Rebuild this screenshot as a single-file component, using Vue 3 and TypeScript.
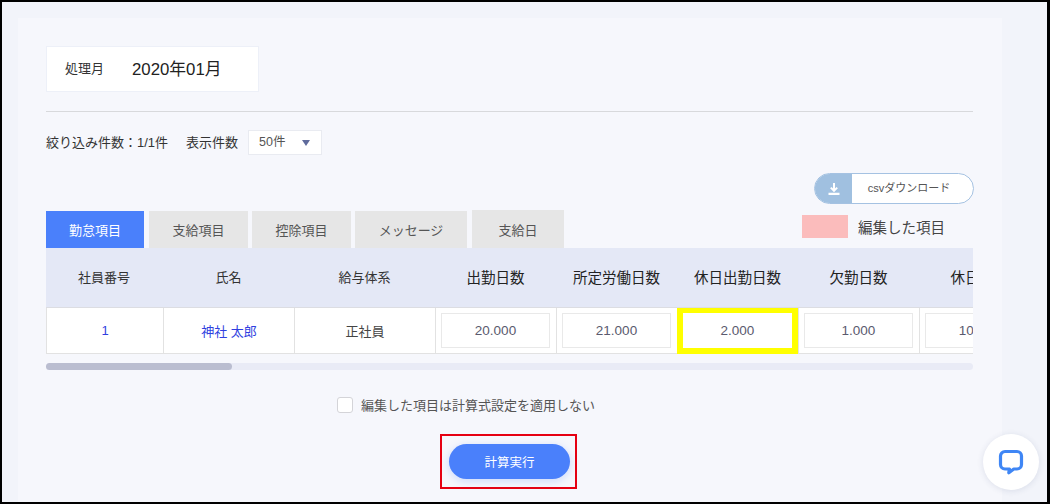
<script setup lang="ts">
const tabs = [
  { label: '勤怠項目', cls: 'tab-attend' },
  { label: '支給項目', cls: 'tab-pay' },
  { label: '控除項目', cls: 'tab-deduct' },
  { label: 'メッセージ', cls: 'tab-msg' },
  { label: '支給日', cls: 'tab-date' },
]
const inputs = [
  { head: '出勤日数', value: '20.000', hl: false },
  { head: '所定労働日数', value: '21.000', hl: false },
  { head: '休日出勤日数', value: '2.000', hl: true },
  { head: '欠勤日数', value: '1.000', hl: false },
  { head: '休日日数', value: '10.000', hl: false },
]
</script>

<template>
  <div class="frame">
    <div class="card">
      <div class="month-box">
        <span class="month-label">処理月</span>
        <span class="month-value">2020年01月</span>
      </div>
      <hr class="divider" />
      <div class="filter-row">
        <span>絞り込み件数：1/1件</span>
        <span class="count-label">表示件数</span>
        <div class="select">
          <span>50件</span>
          <span class="caret"></span>
        </div>
      </div>
      <div class="csv-row">
        <div class="csv-btn">
          <span class="csv-icon">
            <svg width="14" height="14" viewBox="0 0 14 14" fill="none" stroke="#fff" stroke-width="2">
              <path d="M7 1v7.500M3.800 5.600 7 8.800l3.200-3.200" />
              <path d="M1.500 11.800h11" stroke-width="2.200" />
            </svg>
          </span>
          <span class="csv-text">csvダウンロード</span>
        </div>
      </div>
      <div class="tab-row">
        <div class="tabs">
          <div v-for="(t, i) in tabs" :key="t.label" class="tab" :class="[t.cls, { active: i === 0 }]">{{ t.label }}</div>
        </div>
        <div class="legend">
          <span class="swatch"></span>
          <span>編集した項目</span>
        </div>
      </div>
      <div class="table-wrap">
        <table class="grid">
          <colgroup>
            <col class="c1" /><col class="c2" /><col class="c3" />
            <col v-for="n in inputs" :key="n.head" class="c4" />
          </colgroup>
          <thead>
            <tr>
              <th>社員番号</th><th>氏名</th><th>給与体系</th>
              <th v-for="n in inputs" :key="n.head" class="big">{{ n.head }}</th>
            </tr>
          </thead>
          <tbody>
            <tr>
              <td class="link">1</td>
              <td class="link">神社 太郎</td>
              <td class="plain">正社員</td>
              <td v-for="n in inputs" :key="n.head" class="input-cell" :class="{ hl: n.hl }">
                <div class="num">{{ n.value }}</div>
              </td>
            </tr>
          </tbody>
        </table>
      </div>
      <div class="scroll"><div class="thumb"></div></div>
      <label class="check-row">
        <span class="check"></span>
        <span class="check-text">編集した項目は計算式設定を適用しない</span>
      </label>
      <div class="run-row">
        <div class="red-box">
          <div class="run-btn">計算実行</div>
        </div>
      </div>
    </div>
    <div class="chat">
      <svg width="26" height="26" viewBox="0 0 26 26" fill="none">
        <path d="M7 2.500h12a4.500 4.500 0 0 1 4.500 4.500v8.500a4.500 4.500 0 0 1-4.500 4.500h-3.200l-5 3.800.6-3.800H7a4.500 4.500 0 0 1-4.500-4.500V7A4.500 4.500 0 0 1 7 2.500Z" stroke="#3f86f5" stroke-width="3.200" stroke-linejoin="round" />
      </svg>
    </div>
  </div>
</template>

<style>
html, body { margin: 0; padding: 0; background: #000; }
</style>

<style scoped>
.frame {
  position: relative;
  box-sizing: border-box;
  width: 1050px;
  height: 504px;
  overflow: hidden;
  background: #f2f4fa;
  border: solid #000;
  border-width: 2px 3px 2px 2px;
  padding: 16px 0 0 16px;
  font-family: "Liberation Sans", "Noto Sans CJK JP", sans-serif;
  color: #333;
  font-size: 13px;
}
.card {
  box-sizing: border-box;
  width: 984px;
  height: 484px;
  background: #f6f7fc;
  padding: 28px 29px 0 28px;
  display: flex;
  flex-direction: column;
}
.month-box {
  box-sizing: border-box;
  width: 213px;
  height: 46px;
  background: #fff;
  border: 1px solid #edf0f8;
  display: flex;
  align-items: center;
  padding: 0 0 3px 18px;
  flex: none;
}
.month-label { font-size: 13px; width: 67px; }
.month-value { font-size: 16.800px; color: #222; }
.divider {
  width: 100%;
  height: 1px;
  border: 0;
  background: #d8d9dc;
  margin: 19px 0 18px;
  flex: none;
}
.filter-row {
  display: flex;
  align-items: center;
  height: 25px;
  flex: none;
  font-size: 13px;
  line-height: 23px;
}
.filter-row > span { padding-bottom: 1px; }
.count-label { margin-left: 18px; }
.select {
  box-sizing: border-box;
  width: 74px;
  height: 25px;
  margin-left: 10px;
  background: #fff;
  border: 1px solid #e9ebf1;
  display: flex;
  align-items: center;
  justify-content: space-between;
  padding: 0 11px 0 10px;
  font-size: 12.500px;
  color: #555;
}
.caret {
  width: 0;
  height: 0;
  border-left: 4.500px solid transparent;
  border-right: 4.500px solid transparent;
  border-top: 6px solid #5f6b9c;
}
.csv-row {
  display: flex;
  justify-content: flex-end;
  margin-top: 18px;
  margin-right: -1px;
  flex: none;
}
.csv-btn {
  box-sizing: border-box;
  width: 160px;
  height: 31px;
  border: 1px solid #a5c2e2;
  border-radius: 16px;
  background: #fff;
  display: flex;
  overflow: hidden;
}
.csv-icon {
  width: 37px;
  background: #a0c0e0;
  display: flex;
  align-items: center;
  justify-content: center;
}
.csv-text {
  flex: 1;
  text-align: center;
  line-height: 29px;
  font-size: 11px;
  color: #555;
  padding-right: 7px;
}
.tab-row {
  display: flex;
  justify-content: space-between;
  height: 38px;
  margin-top: 6px;
  flex: none;
}
.tabs { display: flex; align-items: flex-end; }
.tab {
  box-sizing: border-box;
  height: 37px;
  background: #e6e6e6;
  color: #555;
  font-size: 13px;
  display: flex;
  align-items: center;
  justify-content: center;
  margin-right: 4px;
}
.tab-attend { width: 98px; margin-right: 5px; }
.tab-pay { width: 99px; }
.tab-deduct { width: 99px; }
.tab-msg { width: 112px; margin-right: 5px; }
.tab-date { width: 92px; height: 38px; }
.tab.active { background: #4a80fb; color: #fff; }
.legend {
  display: flex;
  align-items: center;
  gap: 10px;
  height: 23px;
  margin-top: 5px;
  margin-right: 28px;
  font-size: 14.500px;
  color: #444;
}
.swatch { width: 46px; height: 23px; background: #fbbcbc; }
.table-wrap {
  width: 927px;
  overflow: hidden;
  flex: none;
}
.grid {
  border-collapse: separate;
  border-spacing: 0;
  table-layout: fixed;
  width: 995px;
}
.c1 { width: 118px; }
.c2 { width: 131px; }
.c3 { width: 141px; }
.c4 { width: 121px; }
th {
  height: 60px;
  padding: 0 2px 2px 0;
  background: #e4e8f6;
  font-weight: 400;
  font-size: 13px;
  color: #333;
  text-align: center;
  border-bottom: 1px solid #dcdde2;
  box-sizing: border-box;
}
th.big { font-size: 14.500px; color: #222; }
td {
  height: 46px;
  padding: 0;
  background: #fff;
  text-align: center;
  font-size: 13px;
  box-sizing: border-box;
  border-right: 1px solid #e2e2e2;
  border-bottom: 1px solid #e2e2e2;
}
td:first-child { border-left: 1px solid #e2e2e2; }
.link { color: #2f3fe0; }
.plain { color: #444; }
.input-cell { padding: 5px 6px 5px 5px; }
.input-cell.hl {
  border-bottom: 0;
  background: #ffff00;
  padding: 5px 6px 6px 5px;
  box-shadow: -1px 0 0 #ffff00;
}
.num {
  box-sizing: border-box;
  height: 35px;
  line-height: 33px;
  background: #fff;
  border: 1px solid #e9e9e9;
  color: #5a5a6e;
  font-size: 13.500px;
}
.hl .num { border: 0; line-height: 35px; }
.scroll {
  height: 7px;
  margin-top: 9px;
  background: #e9ebf6;
  border-radius: 4px;
  flex: none;
}
.thumb {
  width: 186px;
  height: 7px;
  background: #babdd0;
  border-radius: 4px;
}
.check-row {
  display: flex;
  align-items: center;
  gap: 8px;
  margin-top: 27px;
  margin-left: 291px;
  height: 16px;
  font-size: 13px;
  color: #555;
  flex: none;
}
.check-text { padding-bottom: 2px; }
.check {
  box-sizing: border-box;
  width: 16px;
  height: 16px;
  border: 1px solid #d4d4d8;
  border-radius: 3px;
  background: #fff;
}
.run-row {
  margin-top: 21px;
  margin-left: 394px;
  flex: none;
}
.red-box {
  box-sizing: border-box;
  width: 137px;
  height: 55px;
  border: 2px solid #e60012;
  padding-left: 2px;
  display: flex;
  align-items: center;
  justify-content: center;
}
.run-btn {
  width: 121px;
  height: 35px;
  border-radius: 18px;
  background: #4a80fb;
  box-shadow: 0 2px 8px rgba(74, 128, 251, 0.25);
  color: #fff;
  font-size: 12.500px;
  display: flex;
  align-items: center;
  justify-content: center;
}
.chat {
  position: absolute;
  left: 981px;
  top: 432px;
  width: 56px;
  height: 56px;
  border-radius: 50%;
  background: #fff;
  box-shadow: 0 1px 6px rgba(40, 60, 110, 0.12);
  display: flex;
  align-items: center;
  justify-content: center;
}
</style>
